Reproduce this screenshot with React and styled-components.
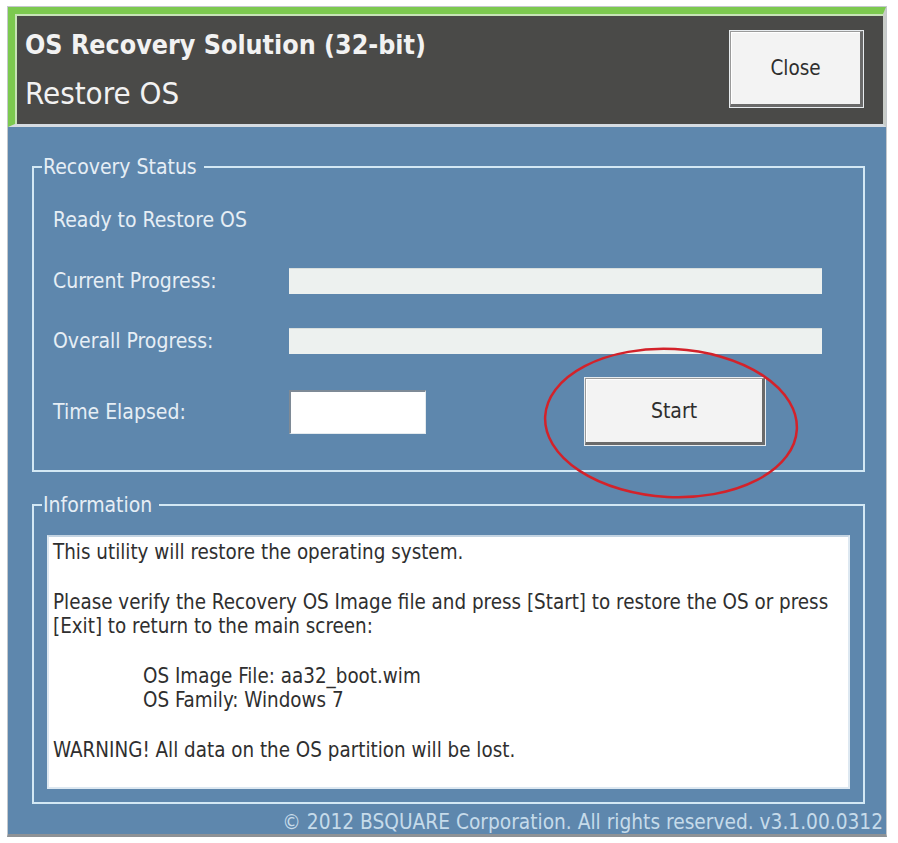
import styled, { createGlobalStyle } from "styled-components";

const GlobalStyle = createGlobalStyle`
  body {
    margin: 0;
    background: #ffffff;
    font-family: "DejaVu Sans Condensed", "DejaVu Sans", sans-serif;
    font-stretch: condensed;
  }
`;

const Window = styled.div`
  margin: 6px 11px 0 7px;
  border: 1px solid #c4c8cc;
  border-bottom: 3px solid #8e9296;
  display: flex;
  flex-direction: column;
  background: #5e87ad;
`;

const Header = styled.header`
  height: 110px;
  display: flex;
  align-items: center;
  justify-content: space-between;
  padding: 0 20px 0 10px;
  background: #4a4a48;
  border-top: 7px solid #7cc94f;
  border-left: 7px solid #7cc94f;
  border-right: 3px solid #c9cdc9;
  border-bottom: 3px solid #d6dce2;
  box-shadow: inset 2px 2px 0 #c7e3b6;
`;

const TitleBlock = styled.div`
  display: flex;
  flex-direction: column;
  gap: 8px;
  color: #f2f2f2;
`;

const Title = styled.h1`
  margin: 0;
  font-size: 26.6px;
  line-height: 40px;
  font-weight: bold;
`;

const Subtitle = styled.div`
  font-size: 31px;
  line-height: 40px;
`;

const Button = styled.button`
  font-family: inherit;
  font-stretch: condensed;
  font-size: ${(p) => p.$size}px;
  color: #2e2e2e;
  width: ${(p) => p.$w}px;
  height: ${(p) => p.$h}px;
  background: #f3f3f3;
  border: 1px solid #9a9a9a;
  border-right: 3px solid #6a6a6a;
  border-bottom: 3px solid #6a6a6a;
  box-shadow: 0 0 0 1px #e8ecef, inset 1px 1px 0 #ffffff;
  padding: 0;
`;

const Body = styled.main`
  display: flex;
  flex-direction: column;
  padding: 28px 21px 0 24px;
  height: 707px;
  box-sizing: border-box;
`;

const Group = styled.fieldset`
  margin: 0;
  padding: 0;
  border: 2px solid #d3e8f4;
  min-width: 0;
  & + & {
    margin-top: 21px;
  }
`;

const Legend = styled.legend`
  margin-left: 8px;
  padding: 0 7px 0 1px;
  font-size: 21px;
  line-height: 24px;
  color: #e6eef5;
`;

const StatusArea = styled.div`
  display: flex;
  flex-direction: column;
  padding: 29px 41px 25px 19px;
  color: #e6eef5;
  font-size: 21px;
`;

const StatusText = styled.div`
  line-height: 24px;
  margin-bottom: 36px;
`;

const Row = styled.div`
  display: grid;
  grid-template-columns: 236px 1fr;
  align-items: center;
  & + & {
    margin-top: 34px;
  }
`;

const TimeRow = styled.div`
  display: flex;
  align-items: center;
  margin-top: 24px;
`;

const Label = styled.span`
  line-height: 24px;
  width: 236px;
`;

const Bar = styled.div`
  height: 26px;
  background: #edf1ef;
  box-shadow: inset 0 1px 0 #d8dedd;
`;

const TimeBox = styled.div`
  width: 137px;
  height: 44px;
  box-sizing: border-box;
  background: #ffffff;
  border-top: 2px solid #7e8a96;
  border-left: 2px solid #7e8a96;
  border-right: 1px solid #e4eaee;
  border-bottom: 1px solid #e4eaee;
`;

const StartWrap = styled.div`
  position: relative;
  margin-left: 159px;
`;

const Ring = styled.svg`
  position: absolute;
  left: -46px;
  top: -33px;
  width: 264px;
  height: 156px;
  pointer-events: none;
  overflow: visible;
`;

const InfoArea = styled.div`
  padding: 18px 13px 13px 13px;
`;

const InfoBox = styled.div`
  height: 254px;
  box-sizing: border-box;
  background: #ffffff;
  border: 2px solid #dde8f1;
  border-top-color: #c4d4e2;
  padding: 3px 4px;
  color: #2f2f2f;
  font-size: 20.4px;
  line-height: 24px;
`;

const Para = styled.p`
  margin: 0 0 26px;
  padding-left: ${(p) => (p.$indent ? 90 : 0)}px;
`;

const Footer = styled.footer`
  margin-top: auto;
  margin-right: -18px;
  text-align: right;
  font-size: 20.7px;
  line-height: 24px;
  color: #c6dbea;
`;

export default function App() {
  return (
    <>
      <GlobalStyle />
      <Window>
        <Header>
          <TitleBlock>
            <Title>OS Recovery Solution (32-bit)</Title>
            <Subtitle>Restore OS</Subtitle>
          </TitleBlock>
          <Button $w={133} $h={76} $size={20.5}>Close</Button>
        </Header>

        <Body>
          <Group>
            <Legend>Recovery Status</Legend>
            <StatusArea>
              <StatusText>Ready to Restore OS</StatusText>
              <Row>
                <Label>Current Progress:</Label>
                <Bar />
              </Row>
              <Row>
                <Label>Overall Progress:</Label>
                <Bar />
              </Row>
              <TimeRow>
                <Label>Time Elapsed:</Label>
                <TimeBox />
                <StartWrap>
                  <Button $w={180} $h={67} $size={21}>Start</Button>
                  <Ring viewBox="0 0 264 156">
                    <ellipse
                      cx="132"
                      cy="78"
                      rx="126"
                      ry="74"
                      fill="none"
                      stroke="#d3222a"
                      strokeWidth="2.5"
                      transform="rotate(3 132 78)"
                    />
                  </Ring>
                </StartWrap>
              </TimeRow>
            </StatusArea>
          </Group>

          <Group>
            <Legend>Information</Legend>
            <InfoArea>
              <InfoBox>
                <Para>This utility will restore the operating system.</Para>
                <Para>
                  Please verify the Recovery OS Image file and press [Start] to restore the OS or press
                  [Exit] to return to the main screen:
                </Para>
                <Para $indent>
                  OS Image File: aa32_boot.wim
                  <br />
                  OS Family: Windows 7
                </Para>
                <Para>WARNING! All data on the OS partition will be lost.</Para>
              </InfoBox>
            </InfoArea>
          </Group>

          <Footer>© 2012 BSQUARE Corporation. All rights reserved. v3.1.00.0312</Footer>
        </Body>
      </Window>
    </>
  );
}
